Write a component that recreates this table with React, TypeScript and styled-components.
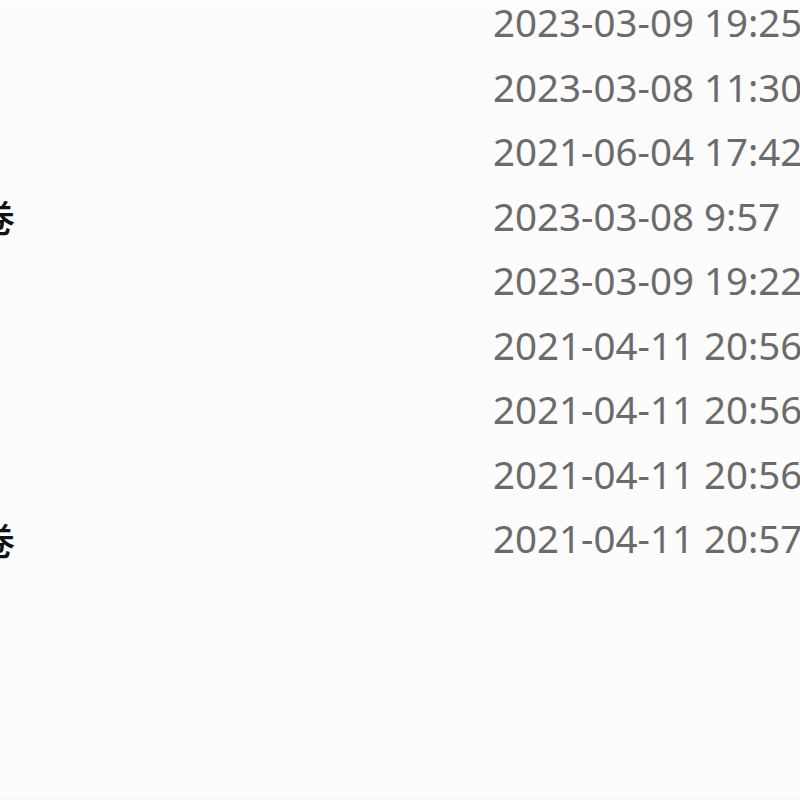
import React from "react";
import styled, { createGlobalStyle } from "styled-components";

const GlobalStyle = createGlobalStyle`
  html, body {
    margin: 0;
    padding: 0;
    background: #fcfcfc;
    overflow: hidden;
  }
  #root {
    width: 800px;
    height: 800px;
    overflow: hidden;
  }
`;

const Page = styled.div`
  box-sizing: border-box;
  width: 800px;
  height: 800px;
  overflow: hidden;
  background: #fcfcfc;
  border-top: 3px solid #fefefe;
  border-bottom: 4px solid #f9f9f9;
  display: flex;
  flex-direction: column;
`;

const List = styled.div`
  display: flex;
  flex-direction: column;
  margin-top: -13px;
`;

const Row = styled.div`
  display: grid;
  grid-template-columns: 228px max-content;
  column-gap: 478px;
  margin-left: -213px;
  height: 64.5px;
  align-items: center;
  white-space: nowrap;
`;

const Name = styled.span`
  font-family: "Noto Sans CJK SC", "Noto Sans", sans-serif;
  font-size: 38px;
  font-weight: 500;
  color: #111111;
`;

const Modified = styled.span`
  font-family: "Noto Sans", "Open Sans", sans-serif;
  font-size: 38.5px;
  color: #6b6b6b;
`;

const files = [
  { name: "资料", date: "2023-03-09 19:25" },
  { name: "作业", date: "2023-03-08 11:30" },
  { name: "笔记", date: "2021-06-04 17:42" },
  { name: "期末考试试卷", date: "2023-03-08 9:57" },
  { name: "课件", date: "2023-03-09 19:22" },
  { name: "实验", date: "2021-04-11 20:56" },
  { name: "复习", date: "2021-04-11 20:56" },
  { name: "习题", date: "2021-04-11 20:56" },
  { name: "单元测验试卷", date: "2021-04-11 20:57" },
];

export default function App() {
  return (
    <>
      <GlobalStyle />
      <Page>
        <List>
          {files.map((f, i) => (
            <Row key={i}>
              <Name>{f.name}</Name>
              <Modified>{f.date}</Modified>
            </Row>
          ))}
        </List>
      </Page>
    </>
  );
}
